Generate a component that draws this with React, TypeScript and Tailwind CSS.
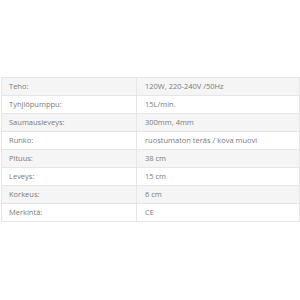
export default function App() {
  const rows: [string, string][] = [
    ["Teho:", "120W, 220-240V /50Hz"],
    ["Tyhjiöpumppu:", "15L/min."],
    ["Saumausleveys:", "300mm, 4mm"],
    ["Runko:", "ruostumaton teräs / kova muovi"],
    ["Pituus:", "38 cm"],
    ["Leveys:", "15 cm"],
    ["Korkeus:", "6 cm"],
    ["Merkintä:", "CE"],
  ];
  return (
    <div className="w-[300px] h-[300px] bg-white overflow-hidden pt-[77px] pl-[1px]" style={{ fontFamily: '"Open Sans", sans-serif' }}>
      <table className="w-[299px] border-collapse text-[7.5px] text-[#7a7a7a]">
        <tbody>
          {rows.map(([k, v], i) => (
            <tr key={k} className={i % 2 === 0 ? "bg-[#f5f5f5]" : "bg-white"}>
              <td className="w-[135px] h-[18px] border border-[#e6e6e6] pl-[7px] align-middle leading-none">{k}</td>
              <td className="h-[18px] border border-[#e6e6e6] pl-[8px] align-middle leading-none">{v}</td>
            </tr>
          ))}
        </tbody>
      </table>
    </div>
  );
}
